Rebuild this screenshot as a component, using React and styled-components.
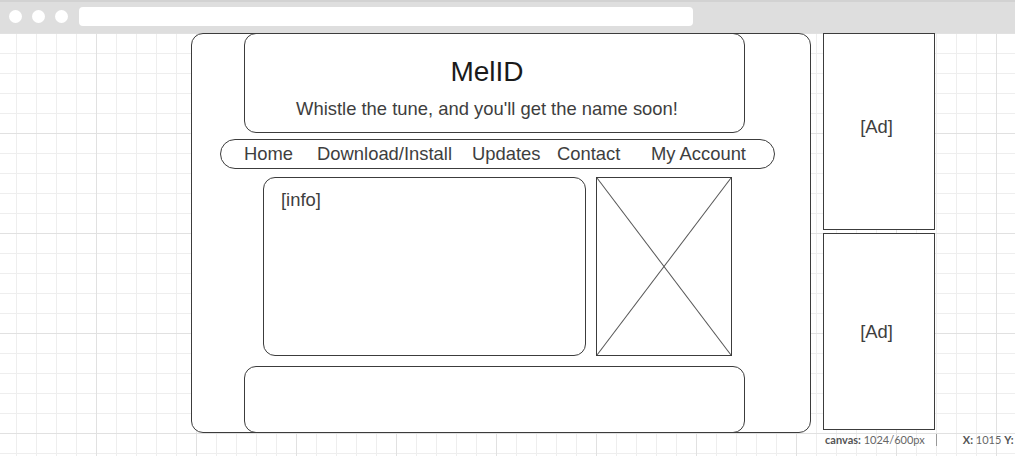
import React from "react";
import styled, { createGlobalStyle } from "styled-components";

const GlobalStyle = createGlobalStyle`
  html, body {
    margin: 0;
    padding: 0;
    background: #fff;
  }
  * {
    box-sizing: border-box;
  }
`;

function App() {
  const links = [
    { label: "Home", gap: 0 },
    { label: "Download/Install", gap: 24 },
    { label: "Updates", gap: 20 },
    { label: "Contact", gap: 16.5 },
    { label: "My Account", gap: 30.5 },
  ];
  return (
    <Page>
      <GlobalStyle />
      <TopBar>
        <Dot />
        <Dot />
        <Dot />
        <UrlBar />
      </TopBar>
      <Canvas>
        <Frame>
          <Header>
            <Title>MelID</Title>
            <Tagline>Whistle the tune, and you'll get the name soon!</Tagline>
          </Header>
          <Nav>
            {links.map(({ label, gap }) => (
              <NavLink key={label} $gap={gap}>
                {label}
              </NavLink>
            ))}
          </Nav>
          <ContentRow>
            <InfoBox>[info]</InfoBox>
            <ImageBox>
              <svg width="100%" height="100%" viewBox="0 0 134 176" preserveAspectRatio="none">
                <line x1="0" y1="0" x2="134" y2="176" stroke="#555" strokeWidth="1" />
                <line x1="134" y1="0" x2="0" y2="176" stroke="#555" strokeWidth="1" />
              </svg>
            </ImageBox>
          </ContentRow>
          <Footer />
        </Frame>
        <AdColumn>
          <Ad $lift={9}>[Ad]</Ad>
          <Ad $lift={0}>[Ad]</Ad>
        </AdColumn>
        <StatusBar>
          <span>
            <b>canvas:</b> 1024/600px
          </span>
          <Divider />
          <span>
            <b>X:</b> 1015 <b>Y:</b>
          </span>
        </StatusBar>
      </Canvas>
    </Page>
  );
}

const Page = styled.div`
  width: 1015px;
  height: 456px;
  overflow: hidden;
  display: flex;
  flex-direction: column;
  font-family: "Liberation Sans", Arial, sans-serif;
`;

const TopBar = styled.div`
  height: 33px;
  flex-shrink: 0;
  background: #dedede;
  border-top: 2px solid #d2d2d2;
  display: flex;
  align-items: center;
  padding-left: 9px;
  padding-bottom: 2px;
  gap: 10px;
`;

const Dot = styled.div`
  width: 13px;
  height: 13px;
  border-radius: 50%;
  background: #fff;
`;

const UrlBar = styled.div`
  width: 614px;
  height: 19px;
  margin-left: 1px;
  background: #fff;
  border-radius: 4px;
`;

const Canvas = styled.div`
  flex: 1;
  position: relative;
  display: flex;
  align-items: flex-start;
  padding-left: 191px;
  background-color: #fff;
  background-image: linear-gradient(to right, #e1e1e1 1px, transparent 1px),
    linear-gradient(to bottom, #e1e1e1 1px, transparent 1px),
    linear-gradient(to right, #eeeeee 1px, transparent 1px),
    linear-gradient(to bottom, #eeeeee 1px, transparent 1px);
  background-size: 100px 100px, 100px 100px, 20px 20px, 20px 20px;
  background-position: 96px 0, 0 0, 16px 0, 0 0;
`;

const Frame = styled.div`
  width: 620px;
  height: 400px;
  border: 1px solid #3c3c3c;
  border-radius: 12px;
  background: #fff;
  display: flex;
  flex-direction: column;
  align-items: flex-start;
`;

const Header = styled.div`
  width: 501px;
  height: 100px;
  margin: -1px 0 0 52px;
  border: 1px solid #3c3c3c;
  border-radius: 12px;
  display: flex;
  flex-direction: column;
  align-items: center;
  padding: 22px 15px 0 0;
`;

const Title = styled.div`
  font-size: 28px;
  line-height: 32px;
  color: #1a1a1a;
`;

const Tagline = styled.div`
  margin-top: 10px;
  font-size: 18.4px;
  line-height: 22px;
  color: #3e3e3e;
`;

const Nav = styled.div`
  width: 555px;
  height: 30px;
  margin: 6px 0 0 28px;
  border: 1px solid #3c3c3c;
  border-radius: 15px;
  display: flex;
  align-items: center;
  padding-left: 23px;
`;

const NavLink = styled.span`
  font-size: 18.4px;
  line-height: 22px;
  color: #3e3e3e;
  margin-left: ${({ $gap }) => $gap}px;
  white-space: nowrap;
`;

const ContentRow = styled.div`
  display: flex;
  gap: 10px;
  margin: 8px 0 0 71px;
`;

const InfoBox = styled.div`
  width: 323px;
  height: 179px;
  border: 1px solid #3c3c3c;
  border-radius: 12px;
  padding: 11px 0 0 17px;
  font-size: 18.4px;
  line-height: 22px;
  color: #3e3e3e;
`;

const ImageBox = styled.div`
  width: 136px;
  height: 179px;
  border: 1px solid #3c3c3c;
  svg {
    display: block;
  }
`;

const Footer = styled.div`
  width: 501px;
  height: 67px;
  margin: 10px 0 -1px 52px;
  border: 1px solid #3c3c3c;
  border-radius: 12px;
`;

const AdColumn = styled.div`
  display: flex;
  flex-direction: column;
  gap: 3px;
  margin-left: 12px;
`;

const Ad = styled.div`
  width: 112px;
  height: 197px;
  border: 1px solid #3c3c3c;
  background: #fff;
  display: flex;
  align-items: center;
  justify-content: center;
  padding-bottom: ${({ $lift }) => $lift}px;
  padding-right: 5px;
  font-size: 18.4px;
  color: #3e3e3e;
`;

const StatusBar = styled.div`
  position: absolute;
  left: 825px;
  top: 400px;
  display: flex;
  align-items: center;
  gap: 11px;
  font-family: Lato, "Open Sans", sans-serif;
  font-size: 11px;
  color: #666;
  white-space: nowrap;
  b {
    font-weight: 700;
    color: #555;
  }
`;

const Divider = styled.div`
  width: 1px;
  height: 12px;
  background: #999;
  margin: 0 15px 0 0;
`;

export default App;
